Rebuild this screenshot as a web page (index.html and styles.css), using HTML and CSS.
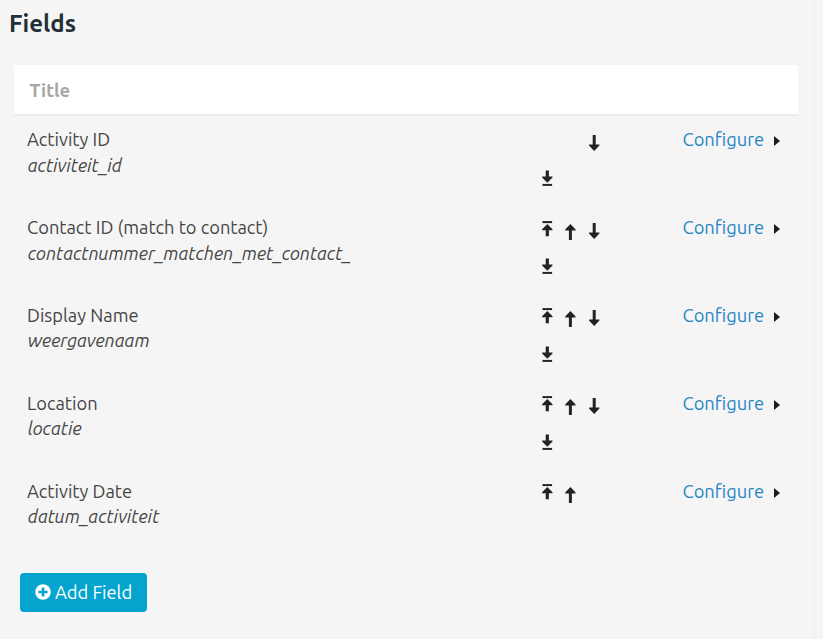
FILE: index.html
```html
<!DOCTYPE html>
<html lang="en">
<head>
<meta charset="utf-8">
<title>Fields</title>
<link rel="stylesheet" href="styles.css">
</head>
<body>
<svg class="defs" aria-hidden="true">
  <symbol id="first" viewBox="0 0 24 36"><path d="M7.5 9.1h9.6v2H7.5z"/><path d="M12.3 12L17.5 17.3v1h-3.6v6h-3.2v-6H7.1v-1z"/></symbol>
  <symbol id="up" viewBox="0 0 24 36"><path d="M11.4 12L16.6 17.4v1.2h-3.7V28H9.9v-9.4H6.2v-1.2z"/></symbol>
  <symbol id="down" viewBox="0 0 24 36"><path d="M12.2 27L17.4 21.6v-1.2h-3.7V11h-3v9.4H7v1.2z"/></symbol>
  <symbol id="last" viewBox="0 0 24 36"><path d="M12.3 22.8L17.5 17.6v-1h-3.6v-6h-3.2v6H7.1v1z"/><path d="M7.5 23.9h9.6v2H7.5z"/></symbol>
</svg>
<main class="panel">
  <h1 class="heading">Fields</h1>
  <section class="table">
    <div class="head">Title</div>
    <div class="row">
      <div class="field"><div class="label">Activity ID</div><em class="name">activiteit<span class="us">_</span>id</em></div>
      <div class="order"><span></span><span></span><svg><use href="#down"/></svg><svg><use href="#last"/></svg></div>
      <div class="actions"><a class="link">Configure</a><i class="caret"></i></div>
    </div>
    <div class="row">
      <div class="field"><div class="label">Contact ID (match to contact)</div><em class="name">contactnummer<span class="us">_</span>matchen<span class="us">_</span>met<span class="us">_</span>contact<span class="us">_</span></em></div>
      <div class="order"><svg><use href="#first"/></svg><svg><use href="#up"/></svg><svg><use href="#down"/></svg><svg><use href="#last"/></svg></div>
      <div class="actions"><a class="link">Configure</a><i class="caret"></i></div>
    </div>
    <div class="row">
      <div class="field"><div class="label">Display Name</div><em class="name">weergavenaam</em></div>
      <div class="order"><svg><use href="#first"/></svg><svg><use href="#up"/></svg><svg><use href="#down"/></svg><svg><use href="#last"/></svg></div>
      <div class="actions"><a class="link">Configure</a><i class="caret"></i></div>
    </div>
    <div class="row">
      <div class="field"><div class="label">Location</div><em class="name">locatie</em></div>
      <div class="order"><svg><use href="#first"/></svg><svg><use href="#up"/></svg><svg><use href="#down"/></svg><svg><use href="#last"/></svg></div>
      <div class="actions"><a class="link">Configure</a><i class="caret"></i></div>
    </div>
    <div class="row">
      <div class="field"><div class="label">Activity Date</div><em class="name">datum<span class="us">_</span>activiteit</em></div>
      <div class="order"><svg><use href="#first"/></svg><svg><use href="#up"/></svg></div>
      <div class="actions"><a class="link">Configure</a><i class="caret"></i></div>
    </div>
  </section>
  <button class="add"><svg class="plus" viewBox="0 0 16 16"><circle cx="8" cy="8" r="7.8" fill="#fff"/><path d="M6.7 3.4h2.6v3.3h3.3v2.6H9.3v3.3H6.7V9.3H3.4V6.7h3.3z" fill="#04a4cf"/></svg><span>Add Field</span></button>
</main>
</body>
</html>
```
FILE: styles.css
```css
* { box-sizing: border-box; }
body {
  margin: 0;
  background: #f5f5f5;
  color: #464646;
  font: 18.3px/25.6px Ubuntu, "Noto Sans", sans-serif;
  overflow: hidden;
}
.defs { position: absolute; width: 0; height: 0; }
.panel {
  width: 815px;
  height: 639px;
  border-right: 1px solid #ececec;
}
.heading {
  margin: 0;
  padding: 8px 0 0 9px;
  height: 65px;
  color: #232f35;
  font-size: 24px;
  line-height: 32px;
}
.table { width: 784px; margin-left: 14px; }
.head {
  height: 51px;
  padding-left: 15.6px;
  background: #fff;
  border-bottom: 2px solid #ededed;
  color: #a6a6a6;
  font-weight: 700;
  line-height: 50px;
}
.row {
  display: grid;
  grid-template-columns: 521.3px 147.2px 1fr;
  height: 87.9px;
}
.field { padding: 11px 0 0 13px; white-space: nowrap; }
.name { display: block; padding-left: 0.8px; font-size: 18.2px; }
.us { letter-spacing: -1.6px; }
.row:nth-child(3) .name { padding-top: 0.5px; }
.order {
  display: grid;
  grid-template-columns: repeat(3, 23.5px);
  grid-auto-rows: 36px;
  padding-top: 8px;
}
.row:nth-child(n+4) .order { padding-top: 7px; grid-auto-rows: 37px; }
.order svg { width: 24px; height: 36px; fill: #232323; }
.actions { display: flex; align-items: flex-start; padding-top: 11px; }
.link { width: 92px; color: #2786c2; }
.caret {
  margin-top: 9px;
  border: solid transparent;
  border-width: 5px 0 5px 6px;
  border-left-color: #1c1c1c;
}
.add {
  display: flex;
  align-items: center;
  width: 127px;
  height: 39px;
  margin: 17.5px 0 0 20px;
  padding: 0 0 0 15px;
  border: 0;
  border-radius: 4px;
  background: #04a4cf;
  color: #fff;
  font: inherit;
  white-space: nowrap;
}
.plus { width: 16px; height: 16px; margin-right: 4px; flex: none; }
```
